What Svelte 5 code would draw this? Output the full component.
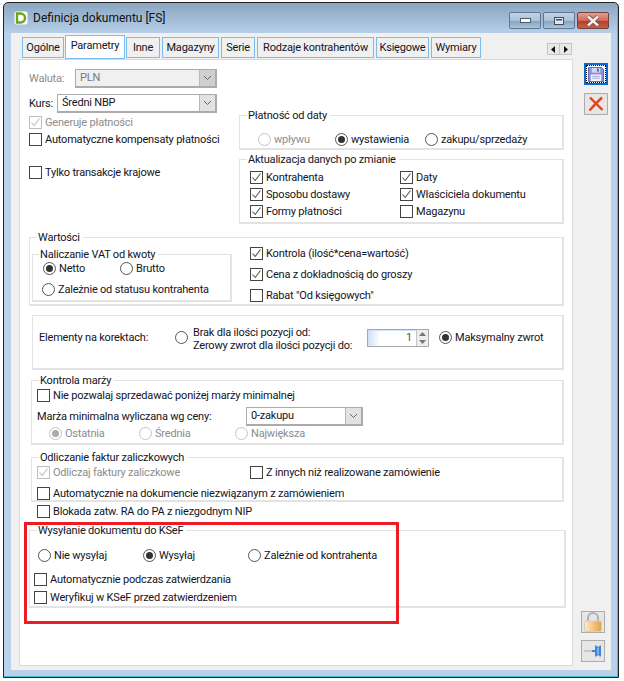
<script>
  const tabs = [
    { name: 'Ogólne', width: 42 },
    { name: 'Parametry', width: 60, active: true },
    { name: 'Inne', width: 34 },
    { name: 'Magazyny', width: 57 },
    { name: 'Serie', width: 34 },
    { name: 'Rodzaje kontrahentów', width: 117 },
    { name: 'Księgowe', width: 53 },
    { name: 'Wymiary', width: 50 }
  ];
</script>

{#snippet chevron()}
  <span class="arrow">
    <svg width="9" height="6" viewBox="0 0 9 6"><polyline points="1,1 4.5,4.5 8,1" fill="none" stroke="#666" /></svg>
  </span>
{/snippet}

{#snippet check(label, on = false, off = false)}
  <span class="opt" class:off>
    <span class="box">
      {#if on}
        <svg width="11" height="11" viewBox="0 0 11 11"><polyline points="1.5,5.5 4.2,8.5 9.5,1.5" fill="none" stroke={off ? '#bbb' : '#555'} stroke-width="1.1" /></svg>
      {/if}
    </span>
    <span>{label}</span>
  </span>
{/snippet}

{#snippet radio(label, on = false, off = false)}
  <span class="opt" class:off>
    <span class="circle">
      {#if on}<span class="dot"></span>{/if}
    </span>
    <span>{label}</span>
  </span>
{/snippet}

<div class="window">
  <header class="title">
    <svg class="logo" width="14" height="14" viewBox="0 0 14 14">
      <rect x="0.5" y="0.5" width="13" height="13" rx="2" fill="#fff" />
      <path d="M3 2.500h3.500a4.500 4.500 0 0 1 0 9H3z" fill="none" stroke="#6aa51e" stroke-width="2.4" />
    </svg>
    <span class="title-text">Definicja dokumentu [FS]</span>
    <div class="caption">
      <span class="cap">
        <svg width="11" height="5" viewBox="0 0 11 5"><rect x="0.5" y="0.5" width="10" height="4" fill="#fff" stroke="#4a5a6a" /></svg>
      </span>
      <span class="cap">
        <svg width="10" height="8" viewBox="0 0 10 8"><rect x="0.5" y="0.5" width="9" height="7" fill="#dfe8f0" stroke="#3d4d5d" /><rect x="2" y="2" width="6" height="1.500" fill="#3d4d5d" /></svg>
      </span>
      <span class="cap close">
        <svg width="16" height="12" viewBox="0 0 16 12"><path d="M3 1.500l10 9M13 1.500l-10 9" stroke="#6a4040" stroke-width="4" /><path d="M3 1.500l10 9M13 1.500l-10 9" stroke="#f4f0ee" stroke-width="2.600" /></svg>
      </span>
    </div>
  </header>

  <div class="body">
    <div class="main">
      <nav class="strip">
        {#each tabs as tab}
          <span class="tab" class:active={tab.active} style="width: {tab.width}px">{tab.name}</span>
        {/each}
        <span class="scroller">
          <span class="step"><svg width="5" height="7" viewBox="0 0 5 7"><path d="M4 0v7L0 3.500z" fill="#111" /></svg></span>
          <span class="step"><svg width="5" height="7" viewBox="0 0 5 7"><path d="M1 0v7l4-3.500z" fill="#111" /></svg></span>
        </span>
      </nav>

      <div class="page">
        <div class="top">
          <div class="top-left">
            <div class="row combo-row">
              <span class="lbl off waluta">Waluta:</span>
              <span class="combo disabled wide1"><span class="val">PLN</span>{@render chevron()}</span>
            </div>
            <div class="row combo-row kurs-row">
              <span class="lbl kurs">Kurs:</span>
              <span class="combo wide2"><span class="val">Średni NBP</span>{@render chevron()}</span>
            </div>
            <div class="row gen-row">{@render check('Generuje płatności', true, true)}</div>
            <div class="row">{@render check('Automatyczne kompensaty płatności')}</div>
            <div class="row tylko-row">{@render check('Tylko transakcje krajowe')}</div>
          </div>

          <div class="top-right">
            <section class="group platnosc">
              <span class="legend">Płatność od daty</span>
              <div class="row cols-platnosc">
                {@render radio('wpływu', false, true)}
                {@render radio('wystawienia', true)}
                {@render radio('zakupu/sprzedaży')}
              </div>
            </section>
            <section class="group aktualizacja">
              <span class="legend">Aktualizacja danych po zmianie</span>
              <div class="cols-aktual">
                {@render check('Kontrahenta', true)}
                {@render check('Daty', true)}
                {@render check('Sposobu dostawy', true)}
                {@render check('Właściciela dokumentu', true)}
                {@render check('Formy płatności', true)}
                {@render check('Magazynu')}
              </div>
            </section>
          </div>
        </div>

        <section class="group wartosci">
          <span class="legend">Wartości</span>
          <div class="wart-body">
            <section class="group vat">
              <span class="legend vat-legend">Naliczanie VAT od kwoty</span>
              <div class="row cols-vat">
                {@render radio('Netto', true)}
                {@render radio('Brutto')}
              </div>
              <div class="row vat-second">{@render radio('Zależnie od statusu kontrahenta')}</div>
            </section>
            <div class="wart-right">
              <div class="row tall">{@render check('Kontrola (ilość*cena=wartość)', true)}</div>
              <div class="row tall">{@render check('Cena z dokładnością do groszy', true)}</div>
              <div class="row tall">{@render check('Rabat "Od księgowych"')}</div>
            </div>
          </div>
        </section>

        <section class="group korekty">
          <span class="lbl">Elementy na korektach:</span>
          <span class="opt two-line">
            <span class="circle"></span>
            <span class="two-text">Brak dla ilości pozycji od:<br />Zerowy zwrot dla ilości pozycji do:</span>
          </span>
          <span class="spin">
            <span class="spin-val">1</span>
            <span class="spin-btns">
              <span><svg width="7" height="4" viewBox="0 0 7 4"><path d="M3.500 0L7 4H0z" fill="#777" /></svg></span>
              <span><svg width="7" height="4" viewBox="0 0 7 4"><path d="M0 0h7L3.500 4z" fill="#777" /></svg></span>
            </span>
          </span>
          {@render radio('Maksymalny zwrot', true)}
        </section>

        <section class="group marza">
          <span class="legend">Kontrola marży</span>
          <div class="row">{@render check('Nie pozwalaj sprzedawać poniżej marży minimalnej')}</div>
          <div class="row marza-combo">
            <span class="lbl marza-lbl">Marża minimalna wyliczana wg ceny:</span>
            <span class="combo wide3"><span class="val">0-zakupu</span>{@render chevron()}</span>
          </div>
          <div class="row cols-marza">
            {@render radio('Ostatnia', true, true)}
            {@render radio('Średnia', false, true)}
            {@render radio('Największa', false, true)}
          </div>
        </section>

        <section class="group odliczanie">
          <span class="legend">Odliczanie faktur zaliczkowych</span>
          <div class="row cols-odl">
            {@render check('Odliczaj faktury zaliczkowe', true, true)}
            {@render check('Z innych niż realizowane zamówienie')}
          </div>
          <div class="row odl-second">{@render check('Automatycznie na dokumencie niezwiązanym z zamówieniem')}</div>
        </section>
        <div class="row blokada">{@render check('Blokada zatw. RA do PA z niezgodnym NIP')}</div>

        <section class="group ksef">
          <span class="legend">Wysyłanie dokumentu do KSeF</span>
          <div class="row cols-ksef">
            {@render radio('Nie wysyłaj')}
            {@render radio('Wysyłaj', true)}
            {@render radio('Zależnie od kontrahenta')}
          </div>
          <div class="row ksef-first">{@render check('Automatycznie podczas zatwierdzania')}</div>
          <div class="row ksef-second">{@render check('Weryfikuj w KSeF przed zatwierdzeniem')}</div>
        </section>

        <div class="marker"></div>
      </div>
    </div>

    <aside class="side">
      <button class="tool save" aria-label="Zapisz">
        <span class="focus">
          <svg width="16" height="15" viewBox="0 0 17 16">
            <path d="M0.500 0.500h14l2 2v13h-16z" fill="#8e92dc" stroke="#5a5eb0" />
            <rect x="4" y="1" width="9" height="5" fill="#d4d6f4" />
            <rect x="9.500" y="1.500" width="2" height="3.500" fill="#6064b8" />
            <rect x="3" y="8" width="11" height="7" fill="#f2f2fa" />
            <path d="M4.500 10h8M4.500 12h8" stroke="#a0a4dc" />
          </svg>
        </span>
      </button>
      <button class="tool cancel" aria-label="Anuluj">
        <svg width="16" height="16" viewBox="0 0 16 16">
          <path d="M2 1.500L14.500 14M14 1.500Q8 7 1.500 14.500" fill="none" stroke="#e8401c" stroke-width="2.400" />
        </svg>
      </button>
      <button class="tool lock" aria-label="Zablokuj">
        <svg width="20" height="20" viewBox="0 0 20 20">
          <defs>
            <linearGradient id="gold" x1="0" x2="1" y1="0" y2="0">
              <stop offset="0" stop-color="#fdeec8" />
              <stop offset="0.6" stop-color="#f3bd72" />
              <stop offset="1" stop-color="#e0a050" />
            </linearGradient>
          </defs>
          <path d="M5 9V6a5 5 0 0 1 10 0v3" fill="none" stroke="#b0b0b0" stroke-width="2" />
          <rect x="1.500" y="9" width="17" height="10.500" rx="1.500" fill="url(#gold)" stroke="#d6cfc0" />
        </svg>
      </button>
      <button class="tool pin" aria-label="Przypnij">
        <svg width="18" height="12" viewBox="0 0 18 12">
          <path d="M0 6h10" stroke="#aaa" />
          <path d="M8 5h3V0.500h1.500v1h3v-1H17v11h-1.500v-1h-3v1H11V7H8z" fill="#3f86d2" />
          <rect x="13" y="2.500" width="2" height="7" fill="#7ab2e6" />
        </svg>
      </button>
    </aside>
  </div>
</div>

<style>
  :global(body) {
    background: #fff;
  }

  .window {
    box-sizing: border-box;
    width: 616px;
    height: 676px;
    margin: 2px 0 0 3px;
    border: 1px solid #222;
    border-radius: 5px 5px 0 0;
    padding: 0 7px 7px;
    background: linear-gradient(180deg, #8ba6c2 0, #b9d1ea 32px);
    box-shadow: inset -1px -1px 0 #3fbcdc;
    font-family: Roboto, Lato, "Liberation Sans", sans-serif;
    font-size: 11px;
    letter-spacing: -0.2px;
    color: #14141e;
  }

  .title {
    display: flex;
    align-items: center;
    height: 30px;
  }
  .logo {
    margin: 0 5px 0 3px;
  }
  .title-text {
    font-size: 12px;
    letter-spacing: 0;
    color: #111;
  }
  .caption {
    display: flex;
    gap: 2px;
    margin-left: auto;
    margin-right: 2px;
    align-self: flex-start;
    margin-top: 9px;
  }
  .cap {
    display: flex;
    align-items: center;
    justify-content: center;
    box-sizing: border-box;
    width: 32px;
    height: 17px;
    border: 1px solid #5f7690;
    border-radius: 2px;
    background: linear-gradient(180deg, #c3d4e6 0, #a9c2da 50%, #83a3c3 52%, #a8c4dc 100%);
  }
  .cap.close {
    border-color: #70403c;
    background: linear-gradient(180deg, #e2a093 0, #cf6a58 50%, #b83a22 52%, #c9604a 100%);
  }

  .body {
    display: flex;
    height: 637px;
    background: #f0f0f0;
  }
  .main {
    display: flex;
    flex-direction: column;
    width: 554px;
    margin-left: 8px;
  }

  .strip {
    display: flex;
    align-items: flex-end;
    gap: 2px;
    height: 26px;
    padding-left: 3px;
    flex: none;
  }
  .tab {
    box-sizing: border-box;
    height: 21px;
    margin-bottom: 1px;
    border: 1px solid #79bcf0;
    background: #f0f0f0;
    line-height: 20px;
    text-align: center;
    white-space: nowrap;
  }
  .tab.active {
    height: 24px;
    margin: 0 -1px;
    background: #fff;
    line-height: 19px;
  }
  .scroller {
    display: flex;
    margin: 0 1px 4px auto;
    background: #e8e8e8;
    border: 1px solid #c4c4c4;
  }
  .step {
    display: flex;
    align-items: center;
    justify-content: center;
    width: 11px;
    height: 10px;
  }
  .step + .step {
    border-left: 1px solid #c4c4c4;
  }

  .page {
    position: relative;
    box-sizing: border-box;
    height: 607px;
    padding-left: 9px;
    border: 1px solid #d9d9d9;
    background: #fff;
  }

  .row {
    display: flex;
    align-items: center;
    height: 17px;
    white-space: nowrap;
  }
  .opt {
    display: inline-flex;
    align-items: center;
    gap: 3px;
    white-space: nowrap;
  }
  .off {
    color: #8c8c8c;
  }
  .box {
    display: flex;
    align-items: center;
    justify-content: center;
    box-sizing: border-box;
    flex: none;
    width: 13px;
    height: 13px;
    border: 1px solid #444;
    background: #fff;
  }
  .off .box {
    border-color: #bdbdbd;
  }
  .circle {
    display: flex;
    align-items: center;
    justify-content: center;
    box-sizing: border-box;
    flex: none;
    width: 13px;
    height: 13px;
    border: 1px solid #555;
    border-radius: 50%;
    background: #fff;
  }
  .off .circle {
    border-color: #c4c4c4;
  }
  .dot {
    width: 7px;
    height: 7px;
    border-radius: 50%;
    background: #333;
  }
  .off .dot {
    background: #aaa;
  }

  .combo {
    display: flex;
    box-sizing: border-box;
    height: 19px;
    border: 2px solid #ababab;
    background: #fff;
    border-width: 1px 2px 2px 1px;
  }
  .combo.disabled {
    background: #f0f0f0;
    color: #777;
  }
  .val {
    flex: 1;
    padding-left: 4px;
    line-height: 16px;
  }
  .arrow {
    display: flex;
    align-items: center;
    justify-content: center;
    width: 15px;
    border-left: 1px solid #b8b8b8;
    background: #e2e2e2;
  }
  .disabled .arrow {
    background: #cfcfcf;
  }
  .combo-row {
    height: 19px;
  }
  .waluta {
    width: 46px;
  }
  .kurs {
    width: 28px;
  }
  .wide1 {
    width: 142px;
  }
  .wide2 {
    width: 160px;
  }
  .wide3 {
    width: 117px;
  }

  .top {
    display: grid;
    grid-template-columns: 210px auto;
    height: 177px;
  }
  .top-left {
    padding-top: 9px;
  }
  .kurs-row {
    margin-top: 6px;
  }
  .gen-row {
    margin-top: 1px;
  }
  .tylko-row {
    margin-top: 16px;
  }
  .top-right {
    padding-top: 55px;
  }

  .group {
    position: relative;
    box-sizing: border-box;
    border: 2px solid #e3e3e3;
    border-width: 1px 2px 2px 1px;
  }
  .legend {
    position: absolute;
    top: -8px;
    left: 7px;
    padding: 0 3px 0 1px;
    background: #fff;
    line-height: 15px;
    white-space: nowrap;
  }

  .platnosc {
    width: 325px;
    height: 35px;
    padding: 15px 0 0 18px;
  }
  .cols-platnosc {
    display: grid;
    grid-template-columns: 77px 90px auto;
  }
  .aktualizacja {
    width: 325px;
    height: 65px;
    margin-top: 9px;
    padding: 9px 0 0 10px;
  }
  .cols-aktual {
    display: grid;
    grid-template-columns: 150px auto;
    grid-auto-rows: 17px;
    align-items: center;
  }

  .wartosci {
    width: 535px;
    height: 69px;
  }
  .wart-body {
    display: flex;
  }
  .vat {
    width: 200px;
    height: 48px;
    margin: 16px 0 0 2px;
    padding: 5px 0 0 10px;
  }
  .vat-legend {
    left: 6px;
  }
  .cols-vat {
    display: grid;
    grid-template-columns: 77px auto;
  }
  .vat-second {
    margin: 4px 0 0 -1px;
  }
  .wart-right {
    margin-left: 18px;
    padding-top: 5px;
  }
  .tall {
    height: 21px;
  }

  .korekty {
    display: grid;
    grid-template-columns: 136px 192px 72px auto;
    align-items: center;
    width: 532px;
    height: 55px;
    margin: 9px 0 0 3px;
    padding: 0 0 9px 6px;
  }
  .two-line {
    gap: 5px;
    line-height: 13px;
  }
  .two-text {
    margin-top: 2px;
  }
  .spin {
    display: flex;
    box-sizing: border-box;
    width: 62px;
    height: 18px;
    border: 1px solid #a8a8a8;
    background: linear-gradient(90deg, #cfe0f4 0, #fff 12px);
    box-shadow: inset 0 1px 0 #cfe0f4;
  }
  .spin-val {
    flex: 1;
    padding-right: 4px;
    color: #555;
    line-height: 16px;
    text-align: right;
  }
  .spin-btns {
    display: flex;
    flex-direction: column;
    width: 11px;
    border-left: 1px solid #c4c4c4;
    background: #ededed;
  }
  .spin-btns span {
    display: flex;
    flex: 1;
    align-items: center;
    justify-content: center;
  }

  .marza {
    width: 533px;
    height: 65px;
    margin: 10px 0 0 2px;
    padding: 6px 0 0 5px;
  }
  .marza-combo {
    height: 18px;
    margin-top: 3px;
  }
  .marza-lbl {
    width: 209px;
  }
  .cols-marza {
    display: grid;
    grid-template-columns: 90px 96px auto;
    padding-left: 12px;
  }

  .odliczanie {
    width: 533px;
    height: 45px;
    margin: 12px 0 0 2px;
    padding: 6px 0 0 5px;
  }
  .cols-odl {
    display: grid;
    grid-template-columns: 213px auto;
  }
  .odl-second {
    margin-top: 4px;
  }
  .blokada {
    margin: 1px 0 0 8px;
  }

  .ksef {
    width: 537px;
    height: 78px;
    margin-top: 10px;
    padding: 16px 0 0 8px;
  }
  .cols-ksef {
    display: grid;
    grid-template-columns: 105px 105px auto;
  }
  .ksef-first {
    margin: 7px 0 0 -4px;
  }
  .ksef-second {
    margin: 1px 0 0 -4px;
  }

  .marker {
    position: absolute;
    left: 4px;
    top: 462px;
    box-sizing: border-box;
    width: 375px;
    height: 102px;
    border: 3px solid #ed1c24;
  }

  .side {
    display: flex;
    flex-direction: column;
    width: 38px;
    padding-bottom: 8px;
    box-sizing: border-box;
  }
  .tool {
    display: flex;
    align-items: center;
    justify-content: center;
    box-sizing: border-box;
    width: 24px;
    height: 22px;
    padding: 0;
    border: 1px solid #acacac;
    background: #e6e6e6;
  }
  .save {
    margin: 30px 0 0 11px;
    border: 2px solid #0a6ad0;
    background: #0a6ad0;
  }
  .focus {
    display: flex;
    align-items: center;
    justify-content: center;
    box-sizing: border-box;
    width: 20px;
    height: 18px;
    border: 1px dotted #000;
    background: #fff;
  }
  .cancel {
    margin: 8px 0 0 11px;
  }
  .lock {
    margin: auto 0 0 8px;
  }
  .pin {
    margin: 7px 0 0 8px;
  }
</style>
